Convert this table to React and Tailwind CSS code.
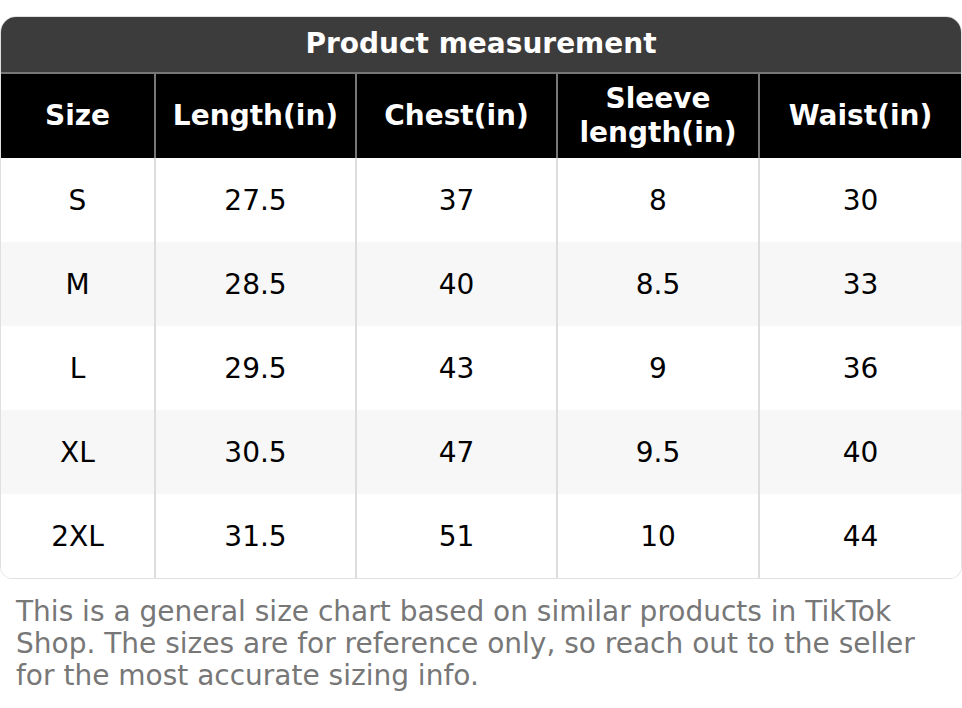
export default function App() {
  const rows = [
    ["S", "27.5", "37", "8", "30"],
    ["M", "28.5", "40", "8.5", "33"],
    ["L", "29.5", "43", "9", "36"],
    ["XL", "30.5", "47", "9.5", "40"],
    ["2XL", "31.5", "51", "10", "44"],
  ];
  const heads = ["Size", "Length(in)", "Chest(in)", "Sleeve length(in)", "Waist(in)"];
  const cols = "grid grid-cols-[153px_201px_201px_202px_203px]";
  return (
    <div className="w-[962px] h-[708px] bg-white pt-4" style={{ fontFamily: '"DejaVu Sans", sans-serif' }}>
      <div className="rounded-t-[16px] rounded-b-[12px] border border-[#e0e0e0] overflow-hidden">
        <div className="h-[57px] bg-[#3c3c3c] text-white font-bold text-[28px] flex items-center justify-center pb-[2px] border-b-2 border-[#777777]">
          Product measurement
        </div>
        <div className={`${cols} bg-black h-[84px]`}>
          {heads.map((h, i) => (
            <div
              key={i}
              className={`flex items-center justify-center text-center text-white font-bold text-[28px] leading-[34px] ${i > 0 ? "border-l-2 border-[#777777]" : ""} ${i === 3 ? "px-4" : "px-2"}`}
            >
              {h}
            </div>
          ))}
        </div>
        {rows.map((r, ri) => (
          <div key={ri} className={`${cols} h-[84px] ${ri % 2 === 1 ? "bg-[#f7f7f7]" : "bg-white"}`}>
            {r.map((c, i) => (
              <div
                key={i}
                className={`flex items-center justify-center pt-[2px] text-black text-[28px] ${i > 0 ? "border-l-2 border-[#dddddd]" : ""}`}
              >
                {c}
              </div>
            ))}
          </div>
        ))}
      </div>
      <p className="px-4 pt-[17px] text-[28px] leading-[32px] text-[#777777]">
        This is a general size chart based on similar products in TikTok Shop. The sizes are for reference only, so reach out to the seller for the most accurate sizing info.
      </p>
    </div>
  );
}
